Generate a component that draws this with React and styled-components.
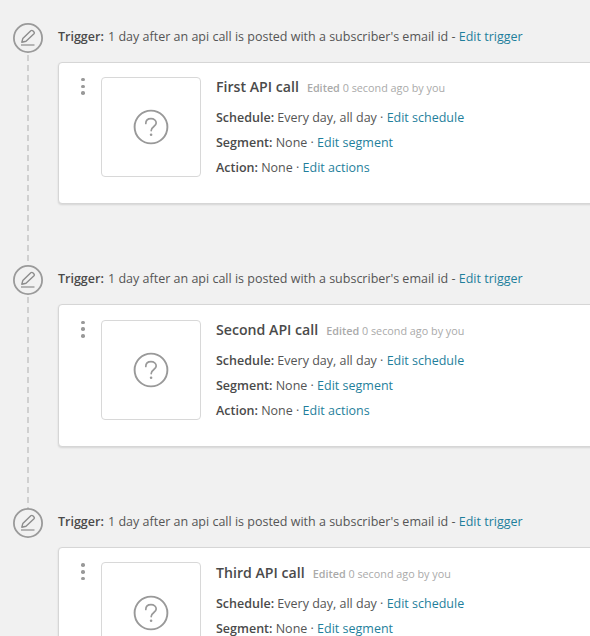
import styled, { createGlobalStyle } from 'styled-components';

const steps = [
  { id: 1, title: 'First API call' },
  { id: 2, title: 'Second API call' },
  { id: 3, title: 'Third API call' },
];

export default function App() {
  return (
    <Page>
      <GlobalStyle />
      {steps.map((step, i) => (
        <Step key={step.id}>
          <Rail>
            <TriggerIcon>
              <svg width="30" height="30" viewBox="0 0 30 30" fill="none">
                <circle cx="15" cy="15" r="14.1" stroke="#9a9a9a" strokeWidth="1.8" />
                <path d="M8.8 19.2 L9.8 15.6 L17.8 7.8 Q18.8 7 19.8 7.8 L21 9 Q21.8 10 21 10.8 L13 18.2 Z" stroke="#8c8c8c" strokeWidth="1.4" strokeLinejoin="round" />
                <path d="M8 22 H21.5" stroke="#8c8c8c" strokeWidth="1.2" />
              </svg>
            </TriggerIcon>
            {i < steps.length - 1 && <Connector />}
          </Rail>
          <Content>
            <Trigger>
              <b>Trigger:</b> 1 day after an api call is posted with a subscriber's email id - <a>Edit trigger</a>
            </Trigger>
            <Card>
              <Menu>
                <i /><i /><i />
              </Menu>
              <Thumb>
                <svg width="36" height="36" viewBox="0 0 36 36" fill="none">
                  <circle cx="18" cy="18" r="16.4" stroke="#999" strokeWidth="1.9" />
                  <path d="M12.8 14.4 C12.8 11.2 15.2 9.6 18 9.6 C20.9 9.6 23.2 11.4 23.2 14 C23.2 17.4 18.2 17.6 18.2 21.6" stroke="#999" strokeWidth="1.7" strokeLinecap="round" />
                  <circle cx="18.1" cy="25.8" r="1.3" fill="#999" />
                </svg>
              </Thumb>
              <Details>
                <TitleRow>
                  <Title>{step.title}</Title>
                  <Edited><em>Edited</em> 0 second ago by you</Edited>
                </TitleRow>
                <Line><b>Schedule:</b> Every day, all day · <a>Edit schedule</a></Line>
                <Line><b>Segment:</b> None · <a>Edit segment</a></Line>
                <Line><b>Action:</b> None · <a>Edit actions</a></Line>
              </Details>
            </Card>
          </Content>
        </Step>
      ))}
    </Page>
  );
}

const GlobalStyle = createGlobalStyle`
  html, body {
    margin: 0;
    background: #f1f1f1;
    overflow: hidden;
  }
`;

const Page = styled.div`
  width: 590px;
  height: 636px;
  overflow: hidden;
  padding: 22.6px 0 0 13px;
  box-sizing: border-box;
  font-family: "Open Sans", sans-serif;
  font-size: 12.5px;
  color: #555;

  & a {
    color: #1f7f9c;
  }

  & b {
    font-weight: 600;
    color: #4a4a4a;
  }
`;

const Step = styled.div`
  display: flex;
  gap: 15px;
  height: 242.75px;
`;

const Rail = styled.div`
  display: flex;
  flex-direction: column;
  align-items: center;
  flex: 0 0 30px;
`;

const TriggerIcon = styled.div`
  width: 30px;
  height: 30px;
  flex: none;

  & svg {
    display: block;
  }
`;

const Connector = styled.div`
  flex: 1;
  width: 2px;
  margin-top: 2px;
  background: repeating-linear-gradient(to bottom, #d0d0d0 0, #d0d0d0 6px, transparent 6px, transparent 10px);
`;

const Content = styled.div`
  flex: 0 0 560px;
`;

const Trigger = styled.div`
  height: 27px;
  line-height: 27px;
  margin-bottom: 12px;

  & b {
    margin-right: 1px;
  }
`;

const Card = styled.div`
  display: flex;
  height: 142.4px;
  box-sizing: border-box;
  padding: 14.4px 0 0 22px;
  background: #fff;
  border: 1px solid #d6d6d6;
  border-radius: 4px;
  box-shadow: 0 1px 2px rgba(0, 0, 0, 0.12);
`;

const Menu = styled.div`
  display: flex;
  flex-direction: column;
  gap: 3.2px;
  width: 4px;
  padding-top: 1px;
  margin-right: 16px;

  & i {
    width: 3.5px;
    height: 3.5px;
    border-radius: 50%;
    background: #999;
  }
`;

const Thumb = styled.div`
  width: 100px;
  height: 100px;
  box-sizing: border-box;
  display: flex;
  align-items: center;
  justify-content: center;
  padding-top: 1px;
  border: 1px solid #d8d8d8;
  border-radius: 4px;
  flex: none;
`;

const Details = styled.div`
  margin-left: 15px;
  padding-top: 0.3px;
`;

const TitleRow = styled.div`
  display: flex;
  align-items: baseline;
  gap: 8px;
  height: 20px;
  line-height: 20px;
  margin-bottom: 8px;
`;

const Title = styled.span`
  font-size: 14.15px;
  font-weight: 600;
  color: #4a4a4a;
`;

const Edited = styled.span`
  font-size: 10.8px;
  color: #aaa;

  & em {
    font-style: normal;
    font-weight: 600;
  }
`;

const Line = styled.div`
  height: 25px;
  line-height: 25px;
`;
